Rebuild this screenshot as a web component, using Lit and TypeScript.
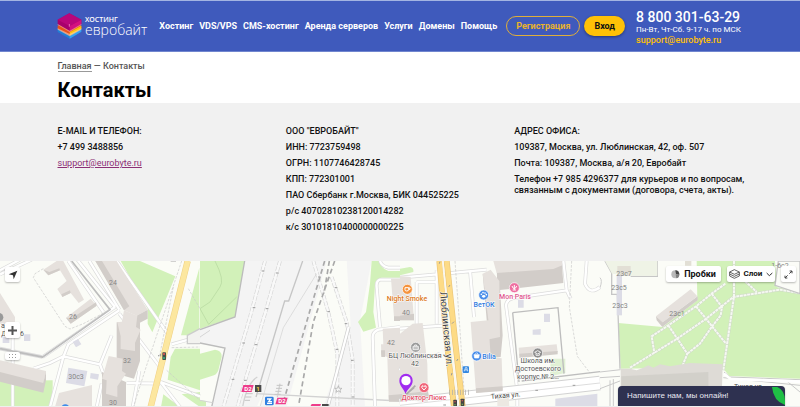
import { LitElement, html, svg, css } from "lit";
import { customElement } from "lit/decorators.js";

const NAV = ["Хостинг", "VDS/VPS", "CMS-хостинг", "Аренда серверов", "Услуги", "Домены", "Помощь"];

const COMPANY = [
  'ООО "ЕВРОБАЙТ"',
  "ИНН: 7723759498",
  "ОГРН: 1107746428745",
  "КПП: 772301001",
  "ПАО Сбербанк г.Москва, БИК 044525225",
  "р/с 40702810238120014282",
  "к/с 30101810400000000225",
];

const OFFICE = [
  "АДРЕС ОФИСА:",
  "109387, Москва, ул. Люблинская, 42, оф. 507",
  "Почта: 109387, Москва, а/я 20, Евробайт",
  "Телефон +7 985 4296377 для курьеров и по вопросам, связанным с документами (договора, счета, акты).",
];

@customElement("site-logo")
class SiteLogo extends LitElement {
  static styles = css`
    :host { display: block; }
    .logo { display: flex; align-items: center; gap: 3px; color: #fff; text-decoration: none; font-family: "Open Sans", sans-serif; }
    .mark { width: 25px; height: 26px; }
    .words { display: flex; flex-direction: column; }
    .top { font-size: 7px; line-height: 8px; font-weight: 600; }
    .name { font-size: 14px; line-height: 12px; font-weight: 300; }
  `;
  render() {
    return html`<a class="logo" href="#">
      <svg class="mark" viewBox="0 0 75 78" aria-hidden="true">
        <path d="M2 48 37 30 73 47v9L38 77 2 57z" fill="#1f7fd6" />
        <path d="M38 68 73 47v9L38 77z" fill="#37a0ee" />
        <path d="M2 38 37 24 73 38v10L38 68 2 48z" fill="#e9531d" />
        <path d="M38 58 73 38v10L38 68z" fill="#ffc20e" />
        <path d="M2 46 38 63 73 46v4L38 70 2 50z" fill="#f4d9c8" opacity=".55" />
        <path d="M2 20 37 1 73 20v14L38 55 2 34z" fill="#a8006c" />
        <path d="M2 20 37 1 73 20 38 39z" fill="#b9067a" />
        <path d="M38 39 73 20v14L38 55z" fill="#d3107f" />
        <path d="M2 33 38 53 73 33v3L38 57 2 36z" fill="#f7b6a8" opacity=".6" />
        <path d="M37 33v8" stroke="#e66ab4" stroke-width="3" />
      </svg>
      <span class="words"><span class="top">ХОСТИНГ</span><span class="name">евробайт</span></span>
    </a>`;
  }
}

@customElement("site-header")
class SiteHeader extends LitElement {
  static styles = css`
    :host { display: block; background: #3f5abc; border-top: 1px solid #a3b4e2; border-bottom: 1px solid #7186cf; color: #fff; }
    .inner { max-width: 686px; margin: 0 auto; height: 50px; display: flex; align-items: center; }
    nav { display: flex; gap: 6px; margin-left: 12px; }
    nav a { color: #fff; text-decoration: none; font-size: 9px; line-height: 12px; font-weight: 700; white-space: nowrap; }
    .actions { display: flex; gap: 4px; margin-left: 9px; }
    button { font: 700 9px/12px Roboto, sans-serif; height: 20px; border-radius: 10px; padding: 0 9px; white-space: nowrap; }
    .ghost { background: transparent; border: 1px solid #dfae3a; color: #e8b32c; }
    .solid { background: #ffc107; border: 0; color: #111; box-shadow: 0 1px 3px #0006; padding: 0 10px; }
    address { font-style: normal; margin-left: 11px; white-space: nowrap; display: flex; flex-direction: column; padding-top: 2px; }
    .tel { font-size: 14px; line-height: 15px; font-weight: 500; color: #fff; text-decoration: none; }
    .hours { font-size: 8px; line-height: 10px; }
    .mail { font-size: 9px; line-height: 10px; font-weight: 500; color: #ffc107; text-decoration: none; }
  `;
  render() {
    return html`<header class="inner">
      <site-logo></site-logo>
      <nav>${NAV.map((n) => html`<a href="#">${n}</a>`)}</nav>
      <div class="actions">
        <button class="ghost">Регистрация</button>
        <button class="solid">Вход</button>
      </div>
      <address>
        <a class="tel" href="tel:88003016329">8 800 301-63-29</a>
        <span class="hours">Пн-Вт, Чт-Сб. 9-17 ч. по МСК</span>
        <a class="mail" href="mailto:support@eurobyte.ru">support@eurobyte.ru</a>
      </address>
    </header>`;
  }
}

const tileA = svg`
  <path class="park" d="M362 12H420L526 58 457 226 443 200V155zM598 12V235L543 235 598 32z M0 372 158 370V395L150 450H0z M525 275H600V400L503 368 512 300z M490 412 540 450H483z M545 412 600 405V450z" />
  <path class="road" d="M0 52 95 8M0 40 60 8M205 12 310 165M232 8 345 150M268 12 358 158M345 150 128 300M358 160 205 262 190 300M0 275 128 300M190 298 300 322 335 235M190 300 150 450M100 335 150 318 190 298M358 170 480 330M480 380 380 378M350 12 510 240M515 262 600 238M482 375 600 418M482 375 540 450M38 240V450M300 322 310 350M305 380 290 450M418 342 398 450" />
  <path class="core" d="M0 52 95 8M0 40 60 8M205 12 310 165M232 8 345 150M268 12 358 158M345 150 128 300M358 160 205 262 190 300M190 298 300 322 335 235M190 300 150 450M100 335 150 318 190 298M358 170 480 330M480 380 380 378M350 12 510 240M515 262 600 238M482 375 600 418M482 375 540 450M38 240V450M300 322 310 350M305 380 290 450M418 342 398 450" />
  <path d="M215 12 330 158 128 300 0 275" fill="none" stroke="#bdbdbd" stroke-width="5" />
  <path class="dash" d="M130 35 105 50 100 62 195 208 210 216 250 200 330 158M545 12 440 325 400 450M520 90 478 300M565 95 600 155M515 272 600 270M500 340 600 430" />
  <path d="M563 12 452 450" stroke="#efcf84" stroke-width="19" />
  <path d="M563 12 452 450" stroke="#fce79f" stroke-width="16" />
  <path class="bld" d="M130 38 145 55 180 40 200 72 172 96 187 120 212 108 236 138 252 128 190 12H170zM198 182 272 125 290 146 212 200z" />
  <path class="bld" d="M0 108 45 180V200H0z M177 408 276 384V450H165z" />
  <path class="side" d="M130 38 145 55 180 40 178 34 148 45zM198 182 212 200 290 146 288 136 212 186zM187 120 212 108 210 100 184 112z" />
  <path class="bld" d="M286 12H350L443 158 410 176 372 160z" />
  <path class="side" d="M286 12H306L388 148 372 160zM443 158 410 176 402 206 443 185z" />
  <path class="bld" d="M0 310 138 342 130 382 0 350z" /><path class="side" d="M0 345 130 378V407L0 374zM138 342 130 378V407L138 370z" />
  <path class="side" d="M350 196H420V312L402 365 350 350z M306 345 378 375V450H306z" />
  <path class="bld" d="M372 160 412 176 408 210 422 218 405 258V282L362 276V238L352 196 366 194z M326 297 368 305 366 342 378 350 352 388V420L318 410 320 370 306 365z" />
  <path class="house" d="M205 332 262 342 253 388 198 378zM272 348 297 352 294 368 270 364zM218 255 234 246 244 262 228 271zM72 232H91V252H72zM8 238H28V258H8z" />
  <rect x="487" y="286" width="11" height="23" rx="2" fill="#46504a" /><circle cx="492" cy="291" r="3" fill="#e55" /><circle cx="492" cy="303" r="3" fill="#3b8" />
  <path d="M476 294V298M482 290V298" class="tick" />
  <path d="M600 215 562 235V260H600" fill="#f2f2ef" stroke="#ccc" stroke-width="4" />
  <circle cx="196" cy="455" r="13" fill="#3f8bea" />
  <circle cx="-3" cy="181" r="13" fill="#999" />
  <path d="M512 12H528" stroke="#bbb" stroke-width="4" />`;

const tileB = svg`
  <path class="rail" d="M134 12H350L400 12 355 450H35L75 275 0 258V215L105 180z" />
  <path class="rail" d="M440 12H515L480 190 495 450H360L440 210z" />
  <path d="M350 12H440L452 205 370 450H170L350 60z" fill="#fbfcf7" />
  <path d="M350 12H380L260 450H180L310 60z" fill="#f4f4f4" />
  <path class="park" d="M0 12H134L105 180 0 215zM0 290 45 278Q66 280 65 300L55 340Q50 355 35 357L0 368zM515 12H540Q542 35 565 42H600V62H545Q525 66 525 85L520 165 528 212 490 224 474 195 498 165 510 80zM0 430 18 432V450H0z" />
  <path d="M134 12 105 180 0 218M0 258 75 273 35 450" fill="none" stroke="#bcbcbc" stroke-width="4" />
  <path d="M0 430 38 437M0 240 30 220" stroke="#d5d5d5" stroke-width="3" />
  <path d="M45 12Q75 70 60 90L30 135 0 155 26 202 110 120" fill="none" stroke="#b4d69d" stroke-width="2" />
  <path class="track" d="M195 12 150 180 70 450M240 12 195 170 112 450M340 12 385 165 412 290V450M395 60 440 195 458 310V450" />
  <path class="core2" d="M195 12 150 180 70 450M240 12 195 170 112 450M340 12 385 165 412 290V450M395 60 440 195 458 310V450" />
  <path class="tick" d="M185 42h8M228 48h8M158 152h8M197 155h8M127 258h8M164 263h8M95 367h8M132 370h8M354 60h8M404 92h8M382 164h8M434 200h8M407 277h8M453 310h8M455 420h8" />
  <path d="M308 12 266 132H254L168 420" fill="none" stroke="#c6c6c6" stroke-width="4" /><path d="M180 450 250 212 350 50" fill="none" stroke="#d0d0d0" stroke-width="2" />
  <path d="M446 210 383 450" stroke="#ccc" stroke-width="11" /><path d="M446 210 383 450" stroke="#fff" stroke-width="7" />
  <path class="metro" d="M374 12 330 160 253 425M404 12 340 195 295 450M388 12 372 110" />
  <path d="M128 450Q140 380 172 360M240 380 232 420M168 410 600 432" fill="none" stroke="#d2d2d2" stroke-width="4" />
  <path d="M230 385H248M228 394H246M226 403H244M224 412H242M138 410H158M136 420H154M134 430H150" stroke="#c5c5c5" stroke-width="3" />
  <path class="road" d="M540 12Q545 28 565 32H600M600 68H540Q528 72 530 90L540 210M600 210 535 218Q518 225 518 240L525 450" />
  <path class="core" d="M540 12Q545 28 565 32H600M600 68H540Q528 72 530 90L540 210M600 210 535 218Q518 225 518 240L525 450" />
  <path class="bld" d="M573 65H600V180H582zM548 215 600 212V430H566L562 300 544 295 543 262 550 262z" /><path class="side" d="M582 178H600V192H582zM543 280H555V300H544zM566 415 600 412V434H567z" />
  <path d="M130 384H161L155 405H124zM232 422H263L257 442H226zM335 441H363L360 450H330zM118 447H146V450H116z" fill="#ee3d8b" />
  <path d="M165 384H184V405H165zM366 441H386V450H366zM150 447H166V450H150z" fill="#4a4a4a" />
  <rect x="195" y="419" width="26" height="26" rx="4" fill="#2f7fe0" /><path d="M201 426H212L206 434H216M201 439H216" fill="none" stroke="#fff" stroke-width="4" />
  <path d="M415 386 418 394 426 394 420 399 422 406 415 402 408 406 410 399 404 394 412 394z" fill="none" stroke="#aaa" stroke-width="2" />`;

const tileC = svg`
  <path class="park" d="M0 35 30 30Q42 32 40 45L0 55z" />
  <path d="M452 305H496V348L450 358z" fill="#e0f0d4" />
  <path class="road" d="M0 62 110 52 260 38M0 215 140 205M210 40 222 180M50 75V210M50 75H110M490 12 500 100 350 122Q320 124 318 145L352 400V450M560 12 555 80Q570 115 600 90M500 100 512 125M0 340Q20 290 95 300L120 290M110 40V200M70 330 80 450" />
  <path class="core" d="M0 62 110 52 260 38M0 215 140 205M210 40 222 180M50 75V210M50 75H110M490 12 500 100 350 122Q320 124 318 145L352 400V450M560 12 555 80Q570 115 600 90M500 100 512 125M0 340Q20 290 95 300L120 290M110 40V200M70 330 80 450" />
  <path class="dash" d="M515 12 508 150 532 298 570 348M165 12 180 220 192 400" />
  <path d="M0 445 600 378" stroke="#d2d2d2" stroke-width="44" /><path d="M0 445 600 378" stroke="#fff" stroke-width="38" />
  <path d="M0 445 600 378" stroke="#ddd" stroke-width="3" />
  <path d="M365 372 600 344M338 167 474 152 492 350" fill="none" stroke="#bdbdbd" stroke-width="4" /><path d="M338 167 357 375" stroke="#bdbdbd" stroke-width="4" />
  <path d="M118 12 140 250 162 450M140 12 165 250 188 450" fill="none" stroke="#ecc678" stroke-width="18" />
  <path d="M118 12 140 250 162 450M140 12 165 250 188 450" fill="none" stroke="#fddb86" stroke-width="14" />
  <path d="M128 12 152 250 174 450" fill="none" stroke="#faf7ee" stroke-width="5" />
  <path d="M148 402H212M148 410H212" stroke="#aaa" stroke-width="8" stroke-dasharray="2 6" />
  <path class="bld" d="M0 57 32 60 42 190 0 190zM0 230 38 200 68 198 82 320 84 434 0 430z" /><path class="side" d="M0 176 42 170V190H0zM0 412 84 402 88 425 0 434z" />
  <path class="side" d="M290 22 485 12 490 78 292 100zM248 50 300 90 308 235 302 300 270 303z" />
  <path class="bld" d="M280 12H485L487 25 460 36 290 48zM248 50 272 38 298 72 300 240 268 247 265 188zM212 195 265 190 272 300 305 304 308 400 228 407zM356 272 470 262 473 285 358 297z" />
  <path class="side" d="M358 290 473 282V292L358 303zM228 394 308 388V402L228 408z" />
  <path d="M292 425 325 405 328 450H292z" fill="#ece8e2" />
  <path class="house" d="M354 128H371V152H354zM432 170H450V195H432zM398 218 422 216V233H398zM466 425 592 410V450H466z" />
  <path class="tick" d="M118 20 120 14M146 90 150 84M156 200 162 194M170 312 174 306M154 355 156 348M130 444h8M406 400h8M518 385h8" />
  <rect x="188" y="328" width="19" height="20" rx="3" fill="#3387e0" /><path d="M193 343V339H203V343M195 339 196 332H201V339" fill="none" stroke="#fff" stroke-width="2" />
  <rect x="160" y="428" width="11" height="22" rx="2" fill="#444" /><rect x="182" y="425" width="11" height="22" rx="2" fill="#444" /><path d="M165 433V436M187 430V433" stroke="#e55" stroke-width="4" /><path d="M165 442V445M187 440V443" stroke="#7c5" stroke-width="4" />
  <circle class="poi" cx="22" cy="97" r="15" fill="#f5923c" /><path d="M15 92H26V98Q26 102 20 102 15 102 15 98zM26 93H30V97H26" fill="none" stroke="#fff" stroke-width="3" />
  <circle class="poi" cx="251" cy="114" r="15" fill="#4a8eea" /><g fill="#fff"><ellipse cx="251" cy="118" rx="5" ry="4" /><circle cx="244" cy="112" r="2.5" /><circle cx="249" cy="107" r="2.5" /><circle cx="255" cy="108" r="2.5" /><circle cx="259" cy="113" r="2.5" /></g>
  <circle class="poi" cx="343" cy="92" r="15" fill="#ee6fa0" /><path d="M336 87Q343 104 350 87M343 84V98M338 99H348" fill="none" stroke="#fff" stroke-width="3" />
  <circle class="poi" cx="230" cy="297" r="15" fill="#4a8eea" /><path d="M222 293H238L236 303H224zM226 292 229 287M234 292 231 287" fill="#fff" stroke="#fff" stroke-width="2" />
  <circle class="poi" cx="47" cy="271" r="15" fill="#999" /><path d="M39 268H55V278H39zM44 267V264H50V267M39 273H55" fill="none" stroke="#fff" stroke-width="2.5" />
  <circle class="poi" cx="413" cy="288" r="15" fill="#8d8d8d" /><path d="M404 286 413 281 422 286 413 291zM408 290V295H418V290" fill="none" stroke="#fff" stroke-width="2.5" />
  <circle class="poi" cx="72" cy="392" r="15" fill="#f0657a" /><path d="M72 399Q62 391 66 387 70 385 72 389 74 385 78 387 82 391 72 399z" fill="none" stroke="#fff" stroke-width="3" />
  <path d="M18 412 42 392M22 409 46 386" stroke="#888" stroke-width="5" opacity=".6" />
  <path d="M18 350A20 20 0 0 1 38 371C38 388 22 395 16 411 14 396 -2 388 -2 371A20 20 0 0 1 18 350z" fill="#a02cf0" /><circle cx="18" cy="371" r="14" fill="#fff" />`;

const tileD = svg`
  <path class="park" d="M290 12H402V118L372 330 62 335 55 198 188 210 292 130z M405 80 400 110 378 258 370 335 388 357 600 365V108L530 90 525 12H404z" />
  <path d="M0 345 62 338M372 345 390 360 600 368M0 362 60 358M370 362 600 385M30 370V450M40 366V450M0 395 60 372M560 372 600 405" fill="none" stroke="#c9c9c9" stroke-width="3" />
  <path d="M372 350 392 366 600 374" fill="none" stroke="#fff" stroke-width="8" />
  <path class="path" d="M90 332 230 246 316 187 400 120 540 98 600 108M376 80 335 110 288 148 205 205 155 238 163 288M205 205 262 290 248 325M288 148 378 260M335 110 366 150 362 175 335 210 300 260 262 290M402 12V118L370 340M435 72 470 105" />
  <path class="pathcore" d="M90 332 230 246 316 187 400 120 540 98 600 108M376 80 335 110 288 148 205 205 155 238 163 288M205 205 262 290 248 325M288 148 378 260M335 110 366 150 362 175 335 210 300 260 262 290M402 12V118L370 340M435 72 470 105" />
  <path d="M535 12 525 85 600 110V12z" fill="#fbfcf7" stroke="#c5c5c5" stroke-width="4" />
  <path d="M15 12 35 48V112H52L60 335M92 58H172V12" fill="none" stroke="#c6c6c6" stroke-width="4" />
  <path d="M15 12H172V56H90L36 50z" fill="#eff3e6" /><path d="M52 27H92V56H52zM255 12H274V26H255z" fill="#e2dfd5" />
  <path class="house" d="M50 55H66V175H50z" /><path d="M0 62Q8 70 0 92" fill="none" stroke="#ccc" stroke-width="3" />
  <path class="bld" d="M168 178 272 97 292 118 188 196z" /><path class="side" d="M168 178 188 196 293 118V130L187 210 170 190z" />
  <path d="M62 335H90L110 340 130 332 145 325 160 332 180 322 210 328 270 318 368 322 366 390H62z" fill="#dedbd6" /><path d="M64 358 325 345V390H64z" fill="#c9c6c1" opacity=".55" />`;

@customElement("office-map")
class OfficeMap extends LitElement {
  static styles = css`
    :host { display: block; position: relative; overflow: hidden; background: #fbfcf7; }
    .canvas { position: absolute; inset: 0; width: 100%; height: 100%; }
    .park { fill: #d2f1b9; }
    .road, .core, .track, .core2, .path, .pathcore, .dash, .metro { fill: none; }
    .road { stroke: #dcdcdc; stroke-width: 11; }
    .core { stroke: #fff; stroke-width: 7; }
    .rail { fill: #f4f4f4; }
    .track { stroke: #d6d6d6; stroke-width: 11; stroke-dasharray: 14 4; }
    .core2 { stroke: #f9f9f9; stroke-width: 7; }
    .path { stroke: #cfdcc6; stroke-width: 9; }
    .pathcore { stroke: #f6f8f2; stroke-width: 6; stroke-dasharray: 9 2; }
    .dash { stroke: #c9c9c9; stroke-width: 2; stroke-dasharray: 8 4; }
    .metro { stroke: #a9a9a9; stroke-width: 5; stroke-dasharray: 15 10; }
    .bld { fill: #e6e1dd; }
    .side { fill: #d2cdc9; }
    .house { fill: #dcdce6; }
    .tick { stroke: #999; stroke-width: 3; fill: none; }
    .poi { stroke: #fff; stroke-width: 2; }
    text { font-family: Roboto, "Noto Sans", sans-serif; font-size: 7px; fill: #555; text-anchor: middle; stroke: #fff; stroke-width: 1px; paint-order: stroke; }
    .num { fill: #858585; stroke: none; }
    .street { font-size: 10px; fill: #444; text-anchor: start; }
    .lane { fill: #444; text-anchor: start; }
    .orange { fill: #dc7a1c; font-weight: 500; }
    .blue { fill: #2f7be0; font-weight: 500; }
    .pink { fill: #e0558c; font-weight: 500; }
    .red { fill: #e4506a; font-weight: 500; }
    .white { fill: #fff; stroke: none; font-weight: 700; font-size: 6px; }
    .yellow { fill: #f5d63d; stroke: none; font-weight: 700; font-size: 6px; }
    button { font: 700 9px/12px Roboto, sans-serif; color: #111; background: #fff; border: 0; border-radius: 2px; box-shadow: 0 1px 2px #0004; padding: 0; display: flex; align-items: center; justify-content: center; }
    .left { position: absolute; left: 5px; top: 6px; display: flex; flex-direction: column; }
    .locate { width: 15px; height: 15px; }
    .plus { width: 15px; height: 16px; margin-top: 40px; }
    .grip { width: 15px; height: 8px; margin-top: 14px; }
    .right { position: absolute; right: 4px; top: 5px; display: flex; gap: 6px; }
    .right button { height: 16px; }
    .traffic { width: 55px; gap: 4px; }
    .layers { width: 48px; gap: 4px; font-size: 8px; }
    .full { width: 15px; }
    .chat { position: absolute; right: 15px; bottom: 0; width: 167px; height: 20px; border-radius: 4px 4px 0 0; background: #2e3150; color: #e8e8f0; font: 400 8px/20px "Liberation Sans", sans-serif; justify-content: flex-start; padding-left: 9px; white-space: nowrap; overflow: hidden; }
    .leaf { position: absolute; right: 0; top: 1px; width: 13px; height: 18px; }
  `;
  render() {
    return html`
      <svg class="canvas" viewBox="0 0 800 146" preserveAspectRatio="xMinYMin slice" role="img" aria-label="Карта">
        <g transform="translate(200 -4) scale(.333333)">${tileB}</g>
        <g transform="translate(0 -4) scale(.333333)">${tileA}</g>
        <g transform="translate(400 -4) scale(.333333)">${tileC}</g>
        <g transform="translate(600 -4) scale(.333333)">${tileD}</g>
        <text class="num" x="113" y="24">24</text>
        <text class="num" x="73" y="58">26</text>
        <text class="num" x="127" y="102">32</text>
        <text class="num" x="76" y="118">30с3</text>
        <text class="num" x="113" y="144">30</text>
        <text x="3" y="67">а</text>
        <text x="4" y="75">Д</text>
        <text x="22" y="75">6</text>
        <text class="num" x="391" y="84">42</text>
        <text class="orange" x="407" y="40">Night Smoke</text>
        <text class="num" x="406" y="54">40</text>
        <text x="415" y="97">БЦ Люблинская</text>
        <text x="415" y="105">42</text>
        <text class="street" transform="translate(440 31) rotate(85)">Люблинская ул.</text>
        <text class="blue" x="484" y="46">ВетОК</text>
        <text class="pink" x="515" y="38">Mon Paris</text>
        <text class="blue" x="489" y="98">Bilia</text>
        <text x="538" y="102">Школа им.</text>
        <text x="538" y="110">Достоевского</text>
        <text x="538" y="118">корпус № 2…</text>
        <text class="lane" transform="translate(491 138) rotate(-5)">Тихая ул.</text>
        <text class="red" x="424" y="139">Доктор-Люкс</text>
        <text class="num" x="624" y="15">23с7</text>
        <text class="num" x="619" y="29">23с5</text>
        <text class="num" x="620" y="47">23с3</text>
        <text class="num" x="677" y="55">23с1</text>
        <text class="num" x="780" y="7">1-6с2</text>
        <text class="lane" x="734" y="128">Тихая ул.</text>
        <text class="white" x="248" y="130">D2</text>
        <text class="yellow" x="258" y="130">1</text>
        <text class="white" x="282" y="142">D2</text>
      </svg>
      <div class="left">
        <button class="locate" aria-label="Моё местоположение"><svg width="10" height="10" viewBox="0 0 30 30"><path d="M28 2 2 13 15 16 17 28z" fill="#333" /></svg></button>
        <button class="plus" aria-label="Приблизить"><svg width="9" height="9" viewBox="0 0 9 9"><path d="M4.5 0V9M0 4.5H9" stroke="#555" stroke-width="2" /></svg></button>
        <button class="grip" aria-label="Масштаб"><svg width="7" height="4" viewBox="0 0 7 4"><path d="M0 .5H7M0 3.5H7" stroke="#999" stroke-dasharray="1 2" /></svg></button>
      </div>
      <div class="right">
        <button class="traffic"><svg width="9" height="9" viewBox="0 0 27 27"><circle cx="13" cy="13" r="12" fill="#b9b9b9" /><path d="M13 1A12 12 0 0 1 25 14L15 12z" fill="#444" /><path d="M25 14A12 12 0 0 1 16 25L14 13z" fill="#808080" /></svg>Пробки</button>
        <button class="layers"><svg width="11" height="10" viewBox="0 0 33 30" fill="none" stroke="#444" stroke-width="2.5"><path d="M16 2 31 9 16 16 2 9zM2 9V15L16 22 31 15V9M2 15V21L16 28 31 21V15" /></svg>Слои<svg width="7" height="5" viewBox="0 0 21 15"><path d="M2 3 10 11 19 3" fill="none" stroke="#333" stroke-width="3" /></svg></button>
        <button class="full" aria-label="На весь экран"><svg width="9" height="9" viewBox="0 0 27 27"><path d="M17 3H24V10M24 3 16 11M10 24H3V17M3 24 11 16" fill="none" stroke="#444" stroke-width="3" /></svg></button>
      </div>
      <button class="chat">Напишите нам, мы онлайн!<svg class="leaf" viewBox="0 0 39 54"><path d="M0 0H16Q39 10 39 42V54Q4 42 0 0z" fill="#1fbf45" /></svg></button>
    `;
  }
}

@customElement("app-root")
class AppRoot extends LitElement {
  static styles = css`
    :host { display: flex; flex-direction: column; min-height: 100vh; background: #fff; color: #111; font-family: Roboto, "Noto Sans", sans-serif; }
    .wrap { width: 100%; max-width: 685px; margin: 0 auto; }
    .crumbs { padding-top: 8px; font-size: 9px; line-height: 12px; font-weight: 500; color: #555; }
    .crumbs a { color: #555; text-decoration: none; border-bottom: 1px solid #999; }
    h1 { margin: 6px 0 0; font-size: 20px; line-height: 25px; font-weight: 700; color: #000; }
    .info { background: #f1f1f1; }
    .cols { display: grid; grid-template-columns: repeat(3, 1fr); padding: 23px 0 28px; font-size: 9px; line-height: 11px; font-weight: 500; }
    .office { margin-right: -8px; }
    p { margin: 0 0 5px; }
    p:last-child { margin: 0; }
    .mail { color: #8c2f75; font-weight: 400; }
    office-map { flex: 1; min-height: 140px; border-bottom: 1px solid #eee; }
  `;
  render() {
    return html`
      <site-header></site-header>
      <div class="wrap">
        <div class="crumbs"><a href="#">Главная</a> — Контакты</div>
        <h1>Контакты</h1>
      </div>
      <section class="info">
        <div class="wrap cols">
          <div><p>E-MAIL И ТЕЛЕФОН:</p><p>+7 499 3488856</p><p><a class="mail" href="mailto:support@eurobyte.ru">support@eurobyte.ru</a></p></div>
          <div>${COMPANY.map((t) => html`<p>${t}</p>`)}</div>
          <div class="office">${OFFICE.map((t) => html`<p>${t}</p>`)}</div>
        </div>
      </section>
      <office-map></office-map>
    `;
  }
}
